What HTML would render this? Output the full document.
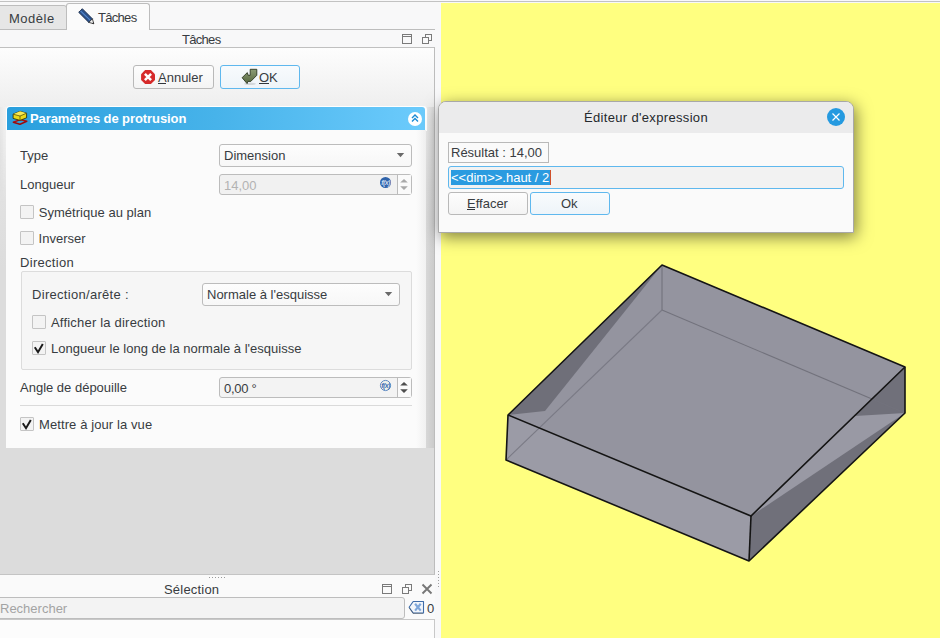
<!DOCTYPE html>
<html><head><meta charset="utf-8">
<style>
*{margin:0;padding:0;box-sizing:border-box}
html,body{width:940px;height:638px;overflow:hidden;background:#f8f8f9;font-family:"Liberation Sans",sans-serif;font-size:13px;color:#383c41}
.a{position:absolute}
.t{position:absolute;white-space:pre;line-height:13px;font-size:13px}
.cb{position:absolute;width:14px;height:14px;border:1px solid #c4c4c4;background:#f3f3f3;border-radius:1px}
.btn{position:absolute;border:1px solid #b9b9b9;border-radius:3px;background:linear-gradient(#fdfdfd,#f4f4f4)}
.btnb{position:absolute;border:1px solid #5fb8ee;border-radius:3px;background:linear-gradient(#f8fbfd,#eef4f9)}
.combo{position:absolute;border:1px solid #bcbcbc;border-radius:3px;background:linear-gradient(#fdfdfd,#f7f7f7)}
.spin{position:absolute;border:1px solid #bcbcbc;border-radius:3px;background:#f1f1f1;overflow:hidden}
</style></head><body>
<!-- top line -->
<div class="a" style="left:0;top:1px;width:940px;height:1px;background:#c2c2c2"></div>

<!-- tabs -->
<div class="a" style="left:-3px;top:5px;width:70px;height:25px;background:#e6e6e6;border:1px solid #bdbdbd;border-top-right-radius:3px"></div>
<div class="a" style="left:0;top:29px;width:435px;height:1px;background:#bdbdbd"></div>
<div class="a" style="left:66px;top:3px;width:84px;height:27px;background:#fbfbfb;border:1px solid #bdbdbd;border-bottom:none;border-radius:3px 3px 0 0"></div>
<div class="t" style="left:9px;top:12px;letter-spacing:0.5px">Modèle</div>
<svg class="a" style="left:74px;top:4px" width="24" height="24" viewBox="0 0 24 24">
  <path d="M4.7 8.3 L8.3 4.7 L18.4 14.8 L14.8 18.4 Z" fill="#2b5089" stroke="#1b2d4a" stroke-width="0.9" stroke-linejoin="round"/>
  <path d="M6.5 6.8 L16.6 16.6" stroke="#5588cc" stroke-width="1.1"/>
  <path d="M14.8 18.4 L18.4 14.8 L19.8 19.8 Z" fill="#f4f4f4" stroke="#222" stroke-width="0.8" stroke-linejoin="round"/>
  <path d="M18.2 19.4 L19.4 18.2 L19.8 19.8 Z" fill="#111"/>
</svg>
<div class="t" style="left:98px;top:11px;letter-spacing:-0.7px">Tâches</div>

<!-- dock title -->
<div class="t" style="left:182px;top:33px;letter-spacing:-0.7px">Tâches</div>
<svg class="a" style="left:400px;top:32px" width="36" height="14" viewBox="0 0 36 14">
  <rect x="2.5" y="2.5" width="9" height="9" fill="none" stroke="#7a7a7a" stroke-width="1"/>
  <line x1="2" y1="4.5" x2="12" y2="4.5" stroke="#7a7a7a"/>
  <rect x="25.5" y="2.5" width="6" height="6" fill="none" stroke="#7a7a7a"/>
  <rect x="22.5" y="5.5" width="6" height="6" fill="#f9f9fa" stroke="#7a7a7a"/>
</svg>

<!-- task panel area -->
<div class="a" style="left:0;top:47px;width:435px;height:528px;border-top:1px solid #c0c0c0;border-right:1px solid #bcbcbc;border-bottom:1px solid #c4c4c4;background:linear-gradient(#fdfdfd 0px,#eeeeee 60px,#e2e2e2 140px,#dcdcdc 220px)"></div>
<div class="a" style="left:0;top:107px;width:6px;height:100px;background:linear-gradient(90deg,rgba(0,0,0,0.02),rgba(255,255,255,0.25));-webkit-mask-image:linear-gradient(#000 40%,transparent)"></div>
<div class="a" style="left:426px;top:107px;width:8px;height:341px;background:linear-gradient(90deg,rgba(0,0,0,0.02),rgba(0,0,0,0.08))"></div>

<!-- buttons -->
<div class="btn" style="left:133px;top:65px;width:81px;height:24px"></div>
<svg class="a" style="left:140px;top:69px" width="16" height="16" viewBox="0 0 16 16">
  <path d="M5.1 1.1 H10.9 L15 5.2 V10.9 L10.9 15 H5.1 L1.1 10.9 V5.2 Z" fill="#d62a2a"/>
  <path d="M4.9 4.9 L11.1 11.1 M11.1 4.9 L4.9 11.1" stroke="#fff" stroke-width="2.5"/>
</svg>
<div class="t" style="left:158px;top:71px">Annuler</div>
<div class="a" style="left:158px;top:83px;width:8px;height:1px;background:#31363b"></div>
<div class="btnb" style="left:220px;top:65px;width:80px;height:24px"></div>
<svg class="a" style="left:238px;top:66px" width="22" height="22" viewBox="0 0 22 22">
  <defs><linearGradient id="ga" x1="0" y1="0" x2="0" y2="1"><stop offset="0" stop-color="#8c9c76"/><stop offset="1" stop-color="#56683f"/></linearGradient></defs>
  <ellipse cx="12" cy="17.8" rx="6" ry="1.2" fill="#000" opacity="0.12"/>
  <path d="M12.2 3.3 H18.8 V9.3 L12.8 15.4 H9.8 L9.1 17.6 L4.1 11.7 L9.3 6.6 L10.2 9.3 H12.2 Z" fill="url(#ga)" stroke="#2c3822" stroke-width="0.9" stroke-linejoin="round"/>
</svg>
<div class="t" style="left:259px;top:71px">OK</div>
<div class="a" style="left:259px;top:83px;width:10px;height:1px;background:#31363b"></div>

<!-- header -->
<div class="a" style="left:6px;top:106px;width:421px;height:25px;background:#fff;border-radius:4px 4px 0 0"></div>
<div class="a" style="left:7px;top:107px;width:418px;height:23px;background:linear-gradient(90deg,#2a9fdd,#47b3ea 50%,#6ccbfc);border-radius:3px 3px 0 0"></div>
<svg class="a" style="left:8px;top:106px" width="24" height="24" viewBox="0 0 24 24">
  <path d="M5.3 16.2 L12.2 13.6 L18.8 15.2 L12 18.3 Z" fill="none" stroke="#b01010" stroke-width="1.5" stroke-linejoin="round"/>
  <path d="M5.2 16.2 L12 18.4 L18.8 15.2" fill="none" stroke="#300" stroke-width="0.5" opacity="0.5"/>
  <path d="M5.1 8.2 L12 5.3 L18.6 7.2 V11.8 L12 14.4 L5.1 12.4 Z" fill="#e9d81a" stroke="#2a2500" stroke-width="0.8" stroke-linejoin="round"/>
  <path d="M5.1 8.2 L12 5.3 L18.6 7.2 L12 10 Z" fill="#f7ea55"/>
  <path d="M5.1 8.2 L12 10 L18.6 7.2 M12 10 V14.4" fill="none" stroke="#4a4200" stroke-width="0.7"/>
</svg>
<div class="t" style="left:30px;top:112px;color:#fff;font-weight:bold;letter-spacing:-0.08px">Paramètres de protrusion</div>
<div class="a" style="left:408px;top:112px;width:14px;height:14px;border-radius:50%;background:#fff"></div>
<svg class="a" style="left:408px;top:112px" width="14" height="14" viewBox="0 0 14 14">
  <path d="M4 6 L7 3 L10 6 M4 9.5 L7 6.5 L10 9.5" fill="none" stroke="#1a8ad4" stroke-width="1.4"/>
</svg>

<!-- panel body -->
<div class="a" style="left:6px;top:130px;width:420px;height:318px;background:linear-gradient(90deg,#fbfbfb 410px,#f1f1f1)"></div>

<div class="t" style="left:20px;top:149px">Type</div>
<div class="combo" style="left:219px;top:144px;width:193px;height:23px"></div>
<div class="t" style="left:224px;top:149px">Dimension</div>
<svg class="a" style="left:395px;top:152px" width="10" height="6"><path d="M1.8 1 H9.2 L5.5 5.2 Z" fill="#6a6a6a"/></svg>

<div class="t" style="left:20px;top:178px">Longueur</div>
<div class="spin" style="left:219px;top:174px;width:193px;height:21px"></div>
<div class="a" style="left:397px;top:175px;width:14px;height:19px;background:#fafafa;border-left:1px solid #bcbcbc"></div>
<div class="t" style="left:224px;top:179px;color:#b3b3b3">14,00</div>
<svg class="a" style="left:379px;top:176px" width="13" height="13" viewBox="0 0 13 13">
  <circle cx="6.5" cy="6.5" r="5.5" fill="#2f63aa"/>
  <text x="6.6" y="9.2" font-size="7" font-family="Liberation Sans" font-style="italic" font-weight="bold" letter-spacing="-0.6" fill="#c9d8ee" text-anchor="middle">f(x)</text>
</svg>
<svg class="a" style="left:399px;top:177px" width="10" height="16"><path d="M1.2 5.5 L5 1.9 L8.8 5.5 Z M1.2 9.3 L5 12.9 L8.8 9.3 Z" fill="#a9a9a9"/></svg>

<div class="cb" style="left:20px;top:205px"></div>
<div class="t" style="left:38.8px;top:206px;letter-spacing:0.02px">Symétrique au plan</div>
<div class="cb" style="left:20px;top:231px"></div>
<div class="t" style="left:38.6px;top:232px">Inverser</div>

<div class="t" style="left:20px;top:256px;letter-spacing:0.3px">Direction</div>
<div class="a" style="left:21px;top:271px;width:391px;height:99px;border:1px solid #dcdcdc;border-radius:2px;background:#f6f6f6"></div>
<div class="t" style="left:32px;top:288px;letter-spacing:0.3px">Direction/arête :</div>
<div class="combo" style="left:202px;top:283px;width:198px;height:23px"></div>
<div class="t" style="left:207px;top:288px">Normale à l'esquisse</div>
<svg class="a" style="left:383px;top:291px" width="10" height="6"><path d="M1.8 1 H9.2 L5.5 5.2 Z" fill="#6a6a6a"/></svg>
<div class="cb" style="left:32px;top:315px"></div>
<div class="t" style="left:51px;top:316px;letter-spacing:0.2px">Afficher la direction</div>
<div class="cb" style="left:32px;top:341px"></div>
<svg class="a" style="left:32px;top:341px" width="14" height="14"><path d="M2.8 6.2 L6 11.2 L10.8 3" fill="none" stroke="#1a1a1a" stroke-width="2"/></svg>
<div class="t" style="left:51px;top:342px">Longueur le long de la normale à l'esquisse</div>

<div class="t" style="left:20px;top:381px">Angle de dépouille</div>
<div class="spin" style="left:219px;top:377px;width:193px;height:21px;background:#f3f3f3"></div>
<div class="a" style="left:397px;top:378px;width:14px;height:19px;background:#fafafa;border-left:1px solid #bcbcbc"></div>
<div class="t" style="left:224px;top:382px;letter-spacing:-0.3px">0,00 °</div>
<svg class="a" style="left:379px;top:379px" width="13" height="13" viewBox="0 0 13 13">
  <circle cx="6.5" cy="6.5" r="5.1" fill="#eef0ea" stroke="#5f8bc4" stroke-width="1"/>
  <text x="6.6" y="9.2" font-size="7" font-family="Liberation Sans" font-style="italic" font-weight="bold" letter-spacing="-0.6" fill="#3f70b4" text-anchor="middle">f(x)</text>
</svg>
<svg class="a" style="left:399px;top:380px" width="10" height="16"><path d="M1.2 5.5 L5 1.9 L8.8 5.5 Z M1.2 9.3 L5 12.9 L8.8 9.3 Z" fill="#4d4d4d"/></svg>
<div class="a" style="left:20px;top:405px;width:392px;height:1px;background:#dadada"></div>
<div class="cb" style="left:20px;top:417px"></div>
<svg class="a" style="left:20px;top:417px" width="14" height="14"><path d="M2.8 6.2 L6 11.2 L10.8 3" fill="none" stroke="#1a1a1a" stroke-width="2"/></svg>
<div class="t" style="left:39px;top:418px;letter-spacing:0.1px">Mettre à jour la vue</div>

<!-- selection dock -->
<div class="a" style="left:0;top:575px;width:435px;height:63px;background:#fafafa"></div>
<svg class="a" style="left:207px;top:575px" width="20" height="4"><g fill="#9a9a9a"><rect x="2" y="2" width="1" height="1"/><rect x="5" y="2" width="1" height="1"/><rect x="8" y="2" width="1" height="1"/><rect x="11" y="2" width="1" height="1"/><rect x="14" y="2" width="1" height="1"/><rect x="17" y="2" width="1" height="1"/></g></svg>
<div class="t" style="left:164px;top:583px;letter-spacing:0.2px">Sélection</div>
<svg class="a" style="left:380px;top:582px" width="56" height="14" viewBox="0 0 56 14">
  <rect x="2.5" y="2.5" width="9" height="9" fill="none" stroke="#7a7a7a"/>
  <line x1="2" y1="4.5" x2="12" y2="4.5" stroke="#7a7a7a"/>
  <rect x="25.5" y="2.5" width="6" height="6" fill="none" stroke="#7a7a7a"/>
  <rect x="22.5" y="5.5" width="6" height="6" fill="#fafafa" stroke="#7a7a7a"/>
  <path d="M42.5 2.5 L51.5 11.5 M51.5 2.5 L42.5 11.5" stroke="#777" stroke-width="1.9"/>
</svg>
<div class="a" style="left:-4px;top:597px;width:409px;height:22px;border:1px solid #bdbdbd;border-radius:3px;background:#f3f3f3"></div>
<div class="t" style="left:0px;top:602px;color:#a3a3a3">Rechercher</div>
<svg class="a" style="left:407px;top:600px" width="18" height="15" viewBox="0 0 18 15">
  <path d="M6.2 1.5 H16.5 V13 H6.2 L2.1 7.3 Z" fill="#f3f6fa" stroke="#3f6ca8" stroke-width="1.1" stroke-linejoin="round"/>
  <path d="M2.3 8 L6 13.4 H16" fill="none" stroke="#333" stroke-width="0.7" opacity="0.6"/>
  <path d="M8.1 3.8 L13.7 10.6 M13.7 3.8 L8.1 10.6" stroke="#7fa7da" stroke-width="2.2"/>
</svg>
<div class="t" style="left:427px;top:602px">0</div>
<div class="a" style="left:-2px;top:619px;width:437px;height:30px;border:1px solid #c8c8c8;background:#fcfcfc"></div>
<svg class="a" style="left:436px;top:569px" width="4" height="22"><g fill="#a0a0a0"><rect x="2" y="2" width="1" height="1"/><rect x="2" y="5" width="1" height="1"/><rect x="2" y="8" width="1" height="1"/><rect x="2" y="11" width="1" height="1"/><rect x="2" y="14" width="1" height="1"/><rect x="2" y="17" width="1" height="1"/></g></svg>

<!-- 3D view -->
<div class="a" style="left:441px;top:3px;width:499px;height:635px;background:#ffff80"></div>
<svg class="a" style="left:0;top:0" width="940" height="638" viewBox="0 0 940 638">
  <polygon points="662,265 662,310 506,460 508,415" fill="#888892"/>
  <polygon points="662,310 905,413 905,367 662,265" fill="#8c8c97"/>
  <polygon points="662,265 905,367 751,516 508,415" fill="#94949f"/>
  <polygon points="662,265 508,415 545,411" fill="#6f6f79"/>
  <polygon points="508,415 751,516 749,561 506,460" fill="#9b9ba6"/>
  <polygon points="751,516 905,367 905,413 749,561" fill="#70707a"/>
  <polygon points="751,516 855,416 905,413" fill="#9999a4"/>
  <line x1="662" y1="265" x2="662" y2="310" stroke="#72727c" stroke-width="1.1"/>
  <line x1="662" y1="310" x2="905" y2="413" stroke="#72727c" stroke-width="1.1"/>
  <line x1="662" y1="310" x2="506" y2="460" stroke="#7a7a85" stroke-width="1.1"/>
  <polygon points="662,265 905,367 905,413 749,561 506,460 508,415" fill="none" stroke="#141414" stroke-width="1.6" stroke-linejoin="round"/>
  <polyline points="508,415 751,516 905,367" fill="none" stroke="#141414" stroke-width="1.6"/>
  <line x1="751" y1="516" x2="749" y2="561" stroke="#141414" stroke-width="1.6"/>
</svg>

<!-- expression dialog -->
<div class="a" style="left:438px;top:101px;width:416px;height:132px;border:1px solid #a8a8a8;border-radius:8px 8px 0 0;background:#fafafa;overflow:hidden;box-shadow:2px 4px 16px rgba(0,0,0,0.5)">
  <div class="a" style="left:0;top:0;width:416px;height:31px;background:#ebebec"></div>
</div>
<div class="t" style="left:584px;top:111px;letter-spacing:0.33px;color:#25292d">Éditeur d'expression</div>
<div class="a" style="left:827px;top:108px;width:18px;height:18px;border-radius:50%;background:#259ae0"></div>
<svg class="a" style="left:827px;top:108px" width="18" height="18"><path d="M5.5 5.5 L12.5 12.5 M12.5 5.5 L5.5 12.5" stroke="#fff" stroke-width="1.2"/></svg>
<div class="a" style="left:448px;top:142px;width:101px;height:21px;border:1px solid #b9b9b9;background:#fafafa"></div>
<div class="t" style="left:451px;top:146px">Résultat : 14,00</div>
<div class="a" style="left:448px;top:166px;width:396px;height:23px;border:1px solid #5fb8ee;border-radius:3px;background:#f2f2f2"></div>
<div class="a" style="left:451px;top:170px;width:100px;height:15px;background:#2a9be0"></div>
<div class="a" style="left:550px;top:170px;width:1px;height:15px;background:#d0502a"></div>
<div class="t" style="left:451px;top:171px;color:#fff">&lt;&lt;dim&gt;&gt;.haut / 2</div>
<div class="btn" style="left:448px;top:192px;width:80px;height:23px"></div>
<div class="t" style="left:467px;top:197px">Effacer</div>
<div class="a" style="left:467px;top:209px;width:8px;height:1px;background:#31363b"></div>
<div class="btnb" style="left:530px;top:192px;width:80px;height:23px"></div>
<div class="t" style="left:561px;top:197px">Ok</div>
</body></html>
